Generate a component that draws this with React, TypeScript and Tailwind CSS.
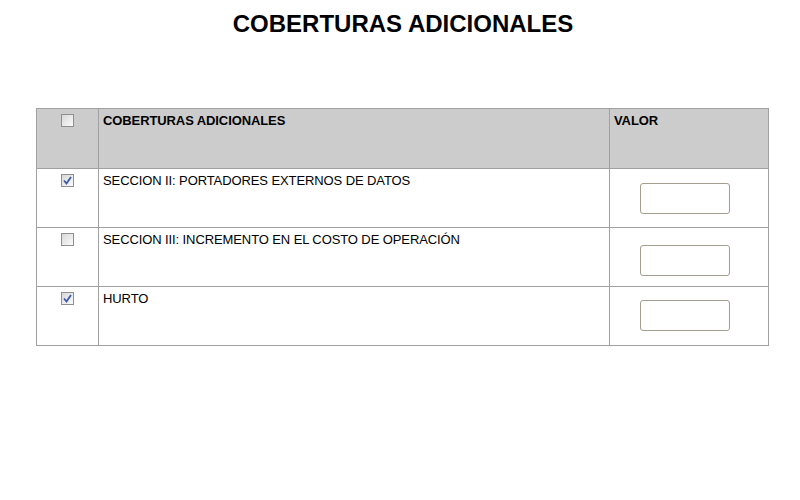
const rows = [
  { label: "SECCION II: PORTADORES EXTERNOS DE DATOS", checked: true, mt: "mt-[9px]" },
  { label: "SECCION III: INCREMENTO EN EL COSTO DE OPERACIÓN", checked: false, mt: "mt-[12px]" },
  { label: "HURTO", checked: true, mt: "mt-[8px]" },
];

const Check = ({ checked }: { checked: boolean }) => (
  <span className="mx-auto flex h-[13px] w-[13px] items-center justify-center border border-[#8f8f8f] bg-gradient-to-br from-[#d8d8d8] to-[#fbfbfb]">
    {checked && (
      <svg width="9" height="9" viewBox="0 0 9 9">
        <path d="M1 4.5 L3.5 7.5 L8 1" fill="none" stroke="#3b5aa8" strokeWidth="1.8" />
      </svg>
    )}
  </span>
);

export default function App() {
  return (
    <div className="h-[500px] w-[800px] bg-white font-['Liberation_Sans',Arial,sans-serif] text-black">
      <h1 className="pl-[6px] pt-[10px] text-center text-[24px] font-bold leading-[28px]">
        COBERTURAS ADICIONALES
      </h1>

      <div className="ml-[36px] mt-[70px] w-[733px] border-b border-r border-[#a0a0a0] text-[13px] leading-[15px] tracking-[-0.1px]">
        <div className="grid h-[60px] grid-cols-[62px_511px_159px] bg-[#cccccc]">
          <div className="border-l border-t border-[#a0a0a0] pt-[5px]">
            <Check checked={false} />
          </div>
          <div className="border-l border-t border-[#a0a0a0] px-[4px] pt-[4px] font-bold">
            COBERTURAS ADICIONALES
          </div>
          <div className="border-l border-t border-[#a0a0a0] px-[4px] pt-[4px] font-bold">
            VALOR
          </div>
        </div>

        {rows.map((r) => (
          <div key={r.label} className="grid h-[59px] grid-cols-[62px_511px_159px]">
            <div className="border-l border-t border-[#a0a0a0] pt-[5px]">
              <Check checked={r.checked} />
            </div>
            <div className="border-l border-t border-[#a0a0a0] px-[4px] pt-[4px]">
              {r.label}
            </div>
            <div className="border-l border-t border-[#a0a0a0] pt-[5px]">
              <input
                type="text"
                className={`${r.mt} ml-[30px] block h-[31px] w-[90px] rounded-[3px] border border-[#a59d8e] bg-white outline-none`}
              />
            </div>
          </div>
        ))}
      </div>
    </div>
  );
}
